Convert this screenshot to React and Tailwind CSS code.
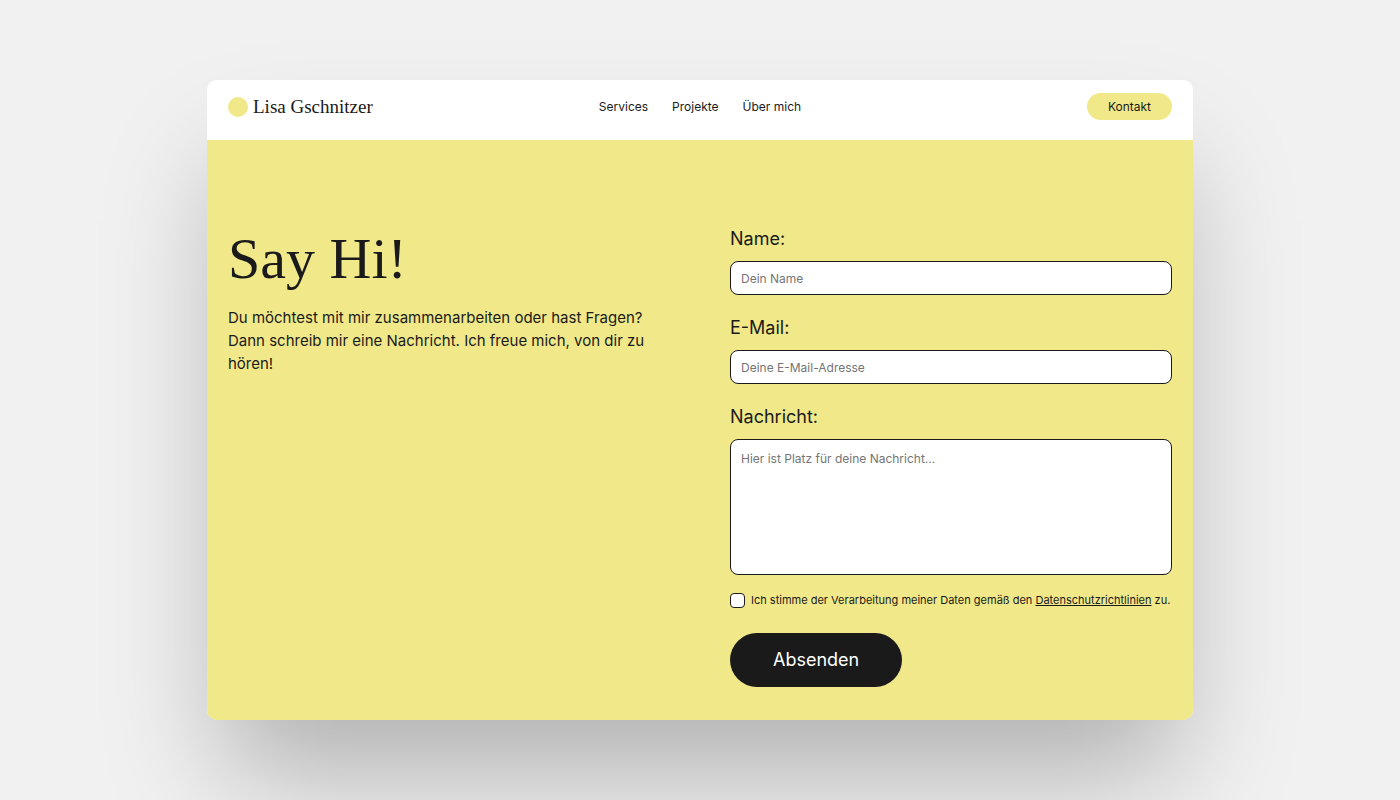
const navLinks = ["Services", "Projekte", "Über mich"];

const fieldClass =
  "block w-full rounded-lg border border-[#1a1a1a] bg-white px-[10px] text-[12px] text-[#1a1a1a] outline-none ring-[#1a1a1a] placeholder:text-[#757575] focus:ring-1";

function Field({ id, label, children }) {
  return (
    <div>
      <label htmlFor={id} className="mb-[9px] block text-[18px] leading-[27px]">
        {label}
      </label>
      {children}
    </div>
  );
}

function Header() {
  return (
    <header className="grid grid-cols-[1fr_auto_1fr] items-center bg-white px-[21px] pt-[13px] pb-5">
      <a href="#start" className="flex items-center gap-[5px]">
        <span className="size-5 rounded-full bg-[#f1e989]" />
        <span className="font-['Liberation_Serif',serif] text-[19px] leading-[27px]">Lisa Gschnitzer</span>
      </a>
      <nav className="flex gap-6 text-[12px]">
        {navLinks.map((name) => (
          <a key={name} href="#">
            {name}
          </a>
        ))}
      </nav>
      <a
        href="#kontakt"
        className="justify-self-end rounded-full bg-[#f1e989] px-[21px] text-[12px] leading-[27px]"
      >
        Kontakt
      </a>
    </header>
  );
}

export default function App() {
  return (
    <div className="min-h-screen bg-[#f1f1f1] py-20 font-['Inter',sans-serif] text-[#1a1a1a]">
      <div className="mx-auto w-full max-w-[986px] rounded-[10px] shadow-[0_70px_110px_-16px_rgba(0,0,0,0.27)]">
        <div className="overflow-hidden rounded-[10px]">
          <Header />
          <main className="grid grid-cols-2 gap-[60px] bg-[#f1e989] px-[21px] pt-[85px] pb-[33px]">
            <section>
              <h1 className="font-['Liberation_Serif',serif] text-[58px] leading-[68px]">Say Hi!</h1>
              <p className="mt-[13px] text-[15px] leading-[23px]">
                Du möchtest mit mir zusammenarbeiten oder hast Fragen? Dann schreib mir eine Nachricht. Ich freue
                mich, von dir zu hören!
              </p>
            </section>
            <form onSubmit={(e) => e.preventDefault()}>
              <div className="flex flex-col gap-[19px]">
                <Field id="name" label="Name:">
                  <input id="name" type="text" placeholder="Dein Name" className={`${fieldClass} h-[34px]`} />
                </Field>
                <Field id="email" label="E-Mail:">
                  <input
                    id="email"
                    type="email"
                    placeholder="Deine E-Mail-Adresse"
                    className={`${fieldClass} h-[34px]`}
                  />
                </Field>
                <Field id="message" label="Nachricht:">
                  <textarea
                    id="message"
                    placeholder="Hier ist Platz für deine Nachricht..."
                    className={`${fieldClass} h-[136px] resize-none py-[10px] leading-[18px]`}
                  />
                </Field>
              </div>
              <div className="mt-[18px] flex items-center gap-[6px] text-[11px] leading-[15px]">
                <input
                  id="consent"
                  type="checkbox"
                  className="size-[15px] shrink-0 appearance-none rounded-[4px] border border-[#1a1a1a] bg-white checked:bg-[#1a1a1a]"
                />
                <label htmlFor="consent">
                  Ich stimme der Verarbeitung meiner Daten gemäß den{" "}
                  <a href="#datenschutz" className="underline">
                    Datenschutzrichtlinien
                  </a>{" "}
                  zu.
                </label>
              </div>
              <button
                type="submit"
                className="mt-[25px] rounded-full bg-[#1a1a1a] px-[43px] text-[18px] leading-[54px] text-white"
              >
                Absenden
              </button>
            </form>
          </main>
        </div>
      </div>
    </div>
  );
}
